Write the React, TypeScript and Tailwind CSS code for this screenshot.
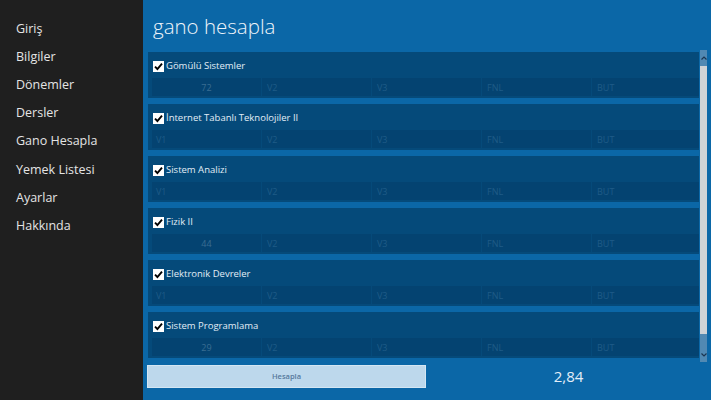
import React from "react";

const menu = ["Giriş", "Bilgiler", "Dönemler", "Dersler", "Gano Hesapla", "Yemek Listesi", "Ayarlar", "Hakkında"];

const courses: { name: string; v1?: string }[] = [
  { name: "Gömülü Sistemler", v1: "72" },
  { name: "İnternet Tabanlı Teknolojiler II" },
  { name: "Sistem Analizi" },
  { name: "Fizik II", v1: "44" },
  { name: "Elektronik Devreler" },
  { name: "Sistem Programlama", v1: "29" },
];

function Check() {
  return (
    <div className="w-[11px] h-[11px] bg-white flex items-center justify-center shrink-0">
      <svg width="9" height="9" viewBox="0 0 9 9">
        <path d="M1 4.6 L3.4 7 L8 1.6" fill="none" stroke="#000" strokeWidth="1.9" />
      </svg>
    </div>
  );
}

function Card({ name, v1 }: { name: string; v1?: string }) {
  const ph = ["V2", "V3", "FNL", "BUT"];
  return (
    <div className="h-[46px] shrink-0 bg-[#054a7a] flex flex-col">
      <div className="mt-[7px] h-[14px] flex items-center pl-[5px] gap-[2px]">
        <Check />
        <span className="text-[9.5px] text-[#e2edf6] leading-none whitespace-nowrap">{name}</span>
      </div>
      <div className="mt-[5px] h-[18px] grid grid-cols-[109px_109px_109px_109px_1fr] gap-px pl-[4px]">
        <div className="bg-[#044371] flex items-center text-[9px] leading-none">
          {v1 ? (
            <span className="w-full text-center text-[#3a6d92]">{v1}</span>
          ) : (
            <span className="pl-[4px] text-[#1f5b87]">V1</span>
          )}
        </div>
        {ph.map((p) => (
          <div key={p} className="bg-[#044371] flex items-center text-[9px] leading-none">
            <span className="pl-[5px] text-[#1f5b87]">{p}</span>
          </div>
        ))}
      </div>
    </div>
  );
}

export default function App() {
  return (
    <div
      className="flex w-[711px] h-[400px] overflow-hidden"
      style={{ fontFamily: '"Open Sans", "Noto Sans", sans-serif' }}
    >
      <aside className="w-[143px] shrink-0 bg-[#1f1f1f] pt-[15px] flex flex-col">
        {menu.map((m) => (
          <div key={m} className="h-[28.2px] flex items-center pl-[16px] text-[12.5px] text-[#e4e4e4]">
            {m}
          </div>
        ))}
      </aside>
      <main className="flex-1 bg-[#0b67a7] flex flex-col">
        <div className="h-[50px] pl-[10px] flex items-start pt-[13px]">
          <h1 className="text-[20.5px] font-light text-[#eef4fa] leading-[26px]">gano hesapla</h1>
        </div>
        <div className="h-[312px] flex">
          <div className="w-[556px] overflow-hidden pl-[5px] pt-[2px] flex flex-col gap-[6px]">
            {courses.map((c) => (
              <Card key={c.name} name={c.name} v1={c.v1} />
            ))}
          </div>
          <div className="w-[7px] ml-[1px] flex flex-col">
            <div className="h-[16px] bg-[#5189b3] flex items-center justify-center">
              <svg width="6" height="4" viewBox="0 0 6 4">
                <path d="M0.5 3.5 L3 1 L5.5 3.5" fill="none" stroke="#1c3550" strokeWidth="1.2" />
              </svg>
            </div>
            <div className="h-[268px] bg-[#cfd3d6]" />
            <div className="flex-1 bg-[#5189b3] flex items-end justify-center pb-[5px]">
              <svg width="6" height="4" viewBox="0 0 6 4">
                <path d="M0.5 0.5 L3 3 L5.5 0.5" fill="none" stroke="#1c3550" strokeWidth="1.2" />
              </svg>
            </div>
          </div>
        </div>
        <div className="h-[38px] flex items-start pt-[3px]">
          <button className="ml-[4px] w-[279px] h-[23px] bg-[#bdd8ec] border border-[#d4e6f3] flex items-center justify-center text-[7.5px] font-semibold text-[#56789c]">
            Hesapla
          </button>
          <div className="flex-1 h-[23px] flex items-center justify-center text-[15px] text-[#e3eef8]">2,84</div>
        </div>
      </main>
    </div>
  );
}
